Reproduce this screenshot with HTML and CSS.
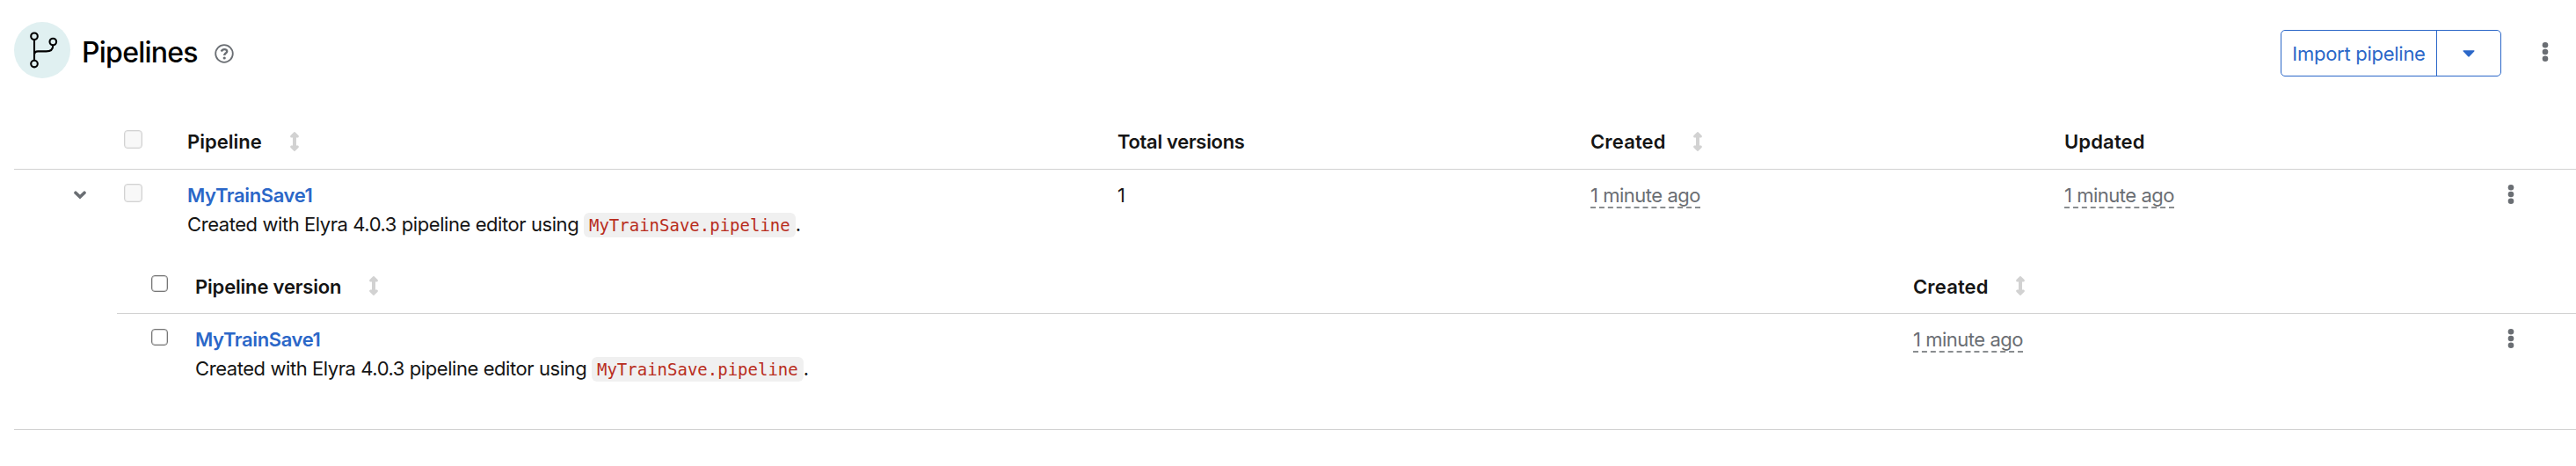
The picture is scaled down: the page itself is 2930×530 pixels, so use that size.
FILE: index.html
```
<!DOCTYPE html>
<html lang="en">
<head>
<meta charset="utf-8">
<title>Pipelines</title>
<link rel="stylesheet" href="styles.css">
</head>
<body>
<svg class="defs" aria-hidden="true">
  <symbol id="sort" viewBox="0 0 12 24"><path d="M5.4 1.2Q6 .8 6.6 1.2L10.7 5.3Q11.3 7.4 9.9 7.6H8V16.4H9.9Q11.3 16.6 10.7 18.7L6.6 22.8Q6 23.2 5.4 22.8L1.3 18.7Q.7 16.6 2.1 16.4H4V7.6H2.1Q.7 7.4 1.3 5.3Z"/></symbol>
  <symbol id="kebab" viewBox="0 0 8 24"><circle cx="4" cy="4.3" r="3.3"/><circle cx="4" cy="12" r="3.3"/><circle cx="4" cy="19.7" r="3.3"/></symbol>
</svg>
<header class="page-header">
  <span class="badge">
    <svg width="64" height="64" viewBox="0 0 64 64" fill="none" stroke="#000" stroke-width="2.1">
      <circle cx="23" cy="16.3" r="3.8"/><circle cx="44.3" cy="22.5" r="3.8"/><circle cx="23" cy="47.6" r="3.8"/>
      <path d="M23 20.2V43.7M23 36.5Q23.5 33.4 27 33.4H36.5C42 33.4 44.3 31 44.3 26.4"/>
    </svg>
  </span>
  <h1 class="title">Pipelines</h1>
  <svg class="help" width="22" height="22" viewBox="0 0 22 22" fill="none" stroke="#6a6e73">
    <circle cx="11" cy="11" r="9.8" stroke-width="1.8"/>
    <path d="M7.7 8.6C8.6 6.6 9.8 6.1 11.2 6.1C13 6.1 14.2 7.2 14.2 8.6C14.2 10.6 11.2 10.6 11.2 12.9" stroke-width="2.4"/>
    <circle cx="11.2" cy="16" r="1.6" fill="#6a6e73" stroke="none"/>
  </svg>
  <div class="actions">
    <div class="split">
      <button class="split-main" type="button">Import pipeline</button>
      <button class="split-toggle" type="button" aria-label="More import options"><svg width="14" height="8" viewBox="0 0 14 8"><path d="M1.2 .3H12.8Q14.1 .5 13.2 1.6L7.8 7.3Q7 8 6.2 7.3L.8 1.6Q-.1 .5 1.2 .3Z" fill="#2b67c8"/></svg></button>
    </div>
    <svg class="kebab"><use href="#kebab"/></svg>
  </div>
</header>
<main class="table">
  <div class="row head">
    <span class="check off"></span>
    <div class="cell name"><span class="t-pipeline">Pipeline</span><svg class="sort"><use href="#sort"/></svg></div>
    <div class="cell total t-total">Total versions</div>
    <div class="cell created"><span class="t-date">Created</span><svg class="sort"><use href="#sort"/></svg></div>
    <div class="cell updated t-date">Updated</div>
  </div>
  <div class="row item">
    <svg class="chevron" width="14" height="10" viewBox="0 0 14 10"><path d="M2 2.2L7 7L12 2.2" fill="none" stroke="#6a6e73" stroke-width="3.6" stroke-linecap="round"/></svg>
    <span class="check off"></span>
    <div class="cell name"><a class="link">MyTrainSave1</a><p class="desc">Created with Elyra 4.0.3 pipeline editor using <code class="code">MyTrainSave.pipeline</code>.</p></div>
    <div class="cell total">1</div>
    <div class="cell created"><span class="ago">1 minute ago</span></div>
    <div class="cell updated"><span class="ago">1 minute ago</span></div>
    <svg class="kebab"><use href="#kebab"/></svg>
  </div>
  <section class="nested">
    <div class="subrow head">
      <span class="check"></span>
      <div class="cell name"><span class="t-version">Pipeline version</span><svg class="sort"><use href="#sort"/></svg></div>
      <div class="cell created"><span class="t-date">Created</span><svg class="sort"><use href="#sort"/></svg></div>
    </div>
    <div class="subrow item">
      <span class="check"></span>
      <div class="cell name"><a class="link">MyTrainSave1</a><p class="desc">Created with Elyra 4.0.3 pipeline editor using <code class="code">MyTrainSave.pipeline</code>.</p></div>
      <div class="cell created"><span class="ago">1 minute ago</span></div>
      <svg class="kebab"><use href="#kebab"/></svg>
    </div>
  </section>
</main>
</body>
</html>
```
FILE: styles.css
```
* { box-sizing: border-box; }
body {
  margin: 0;
  background: #fff;
  color: #151515;
  font: 22px/32px Inter, "Liberation Sans", sans-serif;
}
.defs { display: none; }

/* Page header */
.page-header {
  display: flex;
  align-items: flex-start;
  height: 125px;
  padding: 25px 31px 0 16px;
}
.badge {
  width: 64px;
  height: 64px;
  border-radius: 50%;
  background: #e0f0f1;
}
.badge svg { display: block; }
.title {
  margin: 11px 0 0 13px;
  width: 136px;
  color: #000;
  font-size: 32px;
  font-weight: 500;
  line-height: 48px;
  letter-spacing: -0.75px;
  white-space: nowrap;
}
.help { margin: 25px 0 0 15px; }
.actions {
  display: flex;
  gap: 46px;
  margin: 9px 0 0 auto;
}
.actions .kebab { margin-top: 13px; }
.split {
  display: flex;
  width: 251px;
  height: 53px;
  border: 1px solid #2b67c8;
  border-radius: 5px;
}
.split-main, .split-toggle {
  border: 0;
  padding: 0;
  background: none;
  color: #2b67c8;
  font: inherit;
}
.split-main {
  width: 177px;
  border-right: 1px solid #2b67c8;
  letter-spacing: -0.27px;
}
.split-toggle {
  display: grid;
  flex: 1;
  place-items: center;
}
.kebab { width: 8px; height: 24px; fill: #6a6e73; }
.sort { width: 12px; height: 24px; margin-top: 4px; fill: #d2d2d2; }

/* Pipelines table */
.table { margin-left: 16px; border-bottom: 1px solid #d2d2d2; height: 364px; }
.row {
  display: grid;
  grid-template-columns: 125px 72px 1058px 538px 539px 504px 8px;
  align-items: start;
}
.row > .chevron { grid-area: 1 / 1; margin: 11px 0 0 68px; }
.row > .check { grid-area: 1 / 2; margin-top: 3px; }
.row > .name { grid-area: 1 / 3; }
.head { font-weight: 600; border-bottom: 1px solid #d2d2d2; }
.row > .total { grid-area: 1 / 4; }
.row > .created { grid-area: 1 / 5; }
.row > .updated { grid-area: 1 / 6; }
.row > .kebab { grid-area: 1 / 7; }
.row { grid-template-columns: 125px 72px 1058px 538px 539px 504px 8px; }
.row.head { height: 68px; padding-top: 20px; }
.item { padding-top: 13px; }
.item .kebab { margin-top: 3px; }
.row.item { height: 96px; }
.check {
  width: 19px;
  height: 19px;
  border: 1px solid #767676;
  border-radius: 4px;
  box-shadow: inset 0 0 0 1px #76767650;
}
.check.off {
  width: 21px;
  height: 21px;
  background: #f8f8f8;
  border-color: #d2d2d2;
  box-shadow: inset 0 0 0 1px #d2d2d250;
}
.head .cell { display: flex; }
.t-pipeline { width: 116px; }
.t-version { width: 197px; letter-spacing: -0.18px; }
.t-total { letter-spacing: -0.32px; }
.t-date { letter-spacing: 0.15px; }
.created .t-date { width: 116px; }
.link {
  display: block;
  color: #2b67c8;
  font-weight: 600;
  letter-spacing: -0.37px;
}
.desc { margin: 1px 0 0; letter-spacing: -0.43px; white-space: nowrap; }
.code {
  padding: 3px 6px;
  border-radius: 6px;
  background: #f0f0f0;
  color: #b92d20;
  font: 19px/24px "DejaVu Sans Mono", monospace;
  letter-spacing: 0;
}
.ago {
  display: inline-block;
  height: 31px;
  border-bottom: 2px dashed #8a8d90;
  color: #6a6e73;
  letter-spacing: -0.48px;
  white-space: nowrap;
}

/* Version rows of the expanded pipeline */
.nested { margin-left: 117px; }
.subrow {
  display: grid;
  grid-template-columns: 50px 1954px 676px 8px;
  align-items: start;
  padding-left: 39px;
}
.subrow.head { height: 68px; padding-top: 21px; }
.subrow.head .check, .subrow.head .sort { margin-top: 3px; }
.subrow.item .check { margin-top: 4px; }
```
